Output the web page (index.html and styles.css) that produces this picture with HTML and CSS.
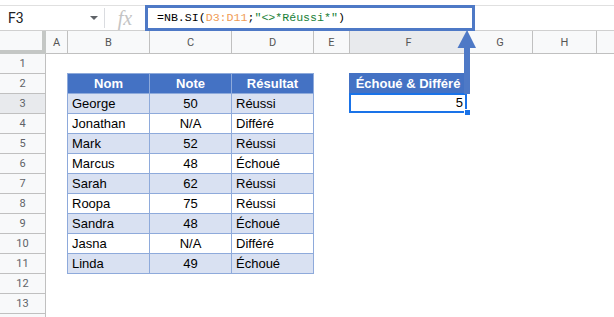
FILE: index.html
```html
<!DOCTYPE html>
<html lang="fr">

<head>
    <meta charset="UTF-8">
    <title>NB.SI - Échoué &amp; Différé</title>
    <link rel="stylesheet" href="styles.css">
</head>

<body>

    <div class="toolbar">
        <div class="namebox"><span>F3</span><span class="caret"></span></div>
        <div class="sep"></div>
        <div class="fx">fx</div>
        <div class="formula">=NB.SI(<span class="ref">D3:D11</span>;<span class="str">"&lt;&gt;*Réussi*"</span>)</div>
    </div>

    <div class="sheet">
        <div class="corner"></div>
        <div class="ch first">A</div>
        <div class="ch">B</div>
        <div class="ch">C</div>
        <div class="ch">D</div>
        <div class="ch">E</div>
        <div class="ch sel">F</div>
        <div class="ch">G</div>
        <div class="ch">H</div>
        <div class="ch"></div>

        <div class="rh">1</div>
        <div class="fill-all"></div>

        <div class="rh">2</div>
        <div></div>
        <div class="t th">Nom</div>
        <div class="t th">Note</div>
        <div class="t th last">Résultat</div>
        <div></div>
        <div class="out-head">Échoué &amp; Différé</div>
        <div class="fill-g"></div>

        <div class="rh sel">3</div>
        <div></div>
        <div class="t odd">George</div>
        <div class="t odd num">50</div>
        <div class="t odd last">Réussi</div>
        <div></div>
        <div class="out">5</div>
        <div class="fill-g"></div>

        <div class="rh">4</div>
        <div></div>
        <div class="t">Jonathan</div>
        <div class="t num">N/A</div>
        <div class="t last">Différé</div>
        <div class="fill-e"></div>

        <div class="rh">5</div>
        <div></div>
        <div class="t odd">Mark</div>
        <div class="t odd num">52</div>
        <div class="t odd last">Réussi</div>
        <div class="fill-e"></div>

        <div class="rh">6</div>
        <div></div>
        <div class="t">Marcus</div>
        <div class="t num">48</div>
        <div class="t last">Échoué</div>
        <div class="fill-e"></div>

        <div class="rh">7</div>
        <div></div>
        <div class="t odd">Sarah</div>
        <div class="t odd num">62</div>
        <div class="t odd last">Réussi</div>
        <div class="fill-e"></div>

        <div class="rh">8</div>
        <div></div>
        <div class="t">Roopa</div>
        <div class="t num">75</div>
        <div class="t last">Réussi</div>
        <div class="fill-e"></div>

        <div class="rh">9</div>
        <div></div>
        <div class="t odd">Sandra</div>
        <div class="t odd num">48</div>
        <div class="t odd last">Échoué</div>
        <div class="fill-e"></div>

        <div class="rh">10</div>
        <div></div>
        <div class="t">Jasna</div>
        <div class="t num">N/A</div>
        <div class="t last">Différé</div>
        <div class="fill-e"></div>

        <div class="rh">11</div>
        <div></div>
        <div class="t odd">Linda</div>
        <div class="t odd num">49</div>
        <div class="t odd last">Échoué</div>
        <div class="fill-e"></div>

        <div class="rh">12</div>
        <div class="fill-all"></div>

        <div class="rh">13</div>
        <div class="fill-all"></div>

        <div class="rh tail"></div>
        <div class="fill-all"></div>
    </div>

    <svg class="arrow" width="20" height="64" viewBox="0 0 20 64">
        <polygon points="0.5,18 10,0 19,18" fill="#4e79c6" />
        <rect x="7" y="17" width="6" height="47" fill="#4e79c6" />
    </svg>

</body>

</html>
```

FILE: styles.css
```css
html,
body {
    height: 100%;
}

body {
    margin: 0;
    font-family: "Liberation Sans", Arial, sans-serif;
    background: #fff;
    overflow: hidden;
    position: relative;
}

/* barre de formule */
.toolbar {
    display: flex;
    align-items: center;
    height: 24px;
    margin-top: 5px;
    border-top: 1px solid #e0e0e0;
    border-bottom: 1px solid #d0d0d0;
}

.namebox {
    width: 104px;
    box-sizing: border-box;
    padding: 0 6px 0 8px;
    display: flex;
    justify-content: space-between;
    align-items: center;
    font-family: Roboto, sans-serif;
    font-size: 14px;
    color: #202124;
}

.caret {
    width: 0;
    height: 0;
    border-left: 4px solid transparent;
    border-right: 4px solid transparent;
    border-top: 4px solid #5f6368;
}

.sep {
    width: 1px;
    height: 20px;
    background: #dadce0;
}

.fx {
    width: 40px;
    text-align: center;
    font-family: "Liberation Serif", serif;
    font-style: italic;
    font-size: 20px;
    line-height: 24px;
    color: #c4c4c4;
}

.formula {
    box-sizing: border-box;
    width: 330px;
    height: 26px;
    margin: -1px 0;
    border: 3px solid #4e79c6;
    padding-left: 9px;
    font-family: "Liberation Mono", monospace;
    font-size: 11.6px;
    line-height: 20px;
    white-space: pre;
    color: #000;
}

.formula .ref {
    color: #f09c55;
}

.formula .str {
    color: #188038;
}

/* grille */
.sheet {
    display: grid;
    grid-template-columns: 46px 21px 82px 82px 82px 36px 118px 65px 64px 1fr;
    grid-template-rows: 23px;
    grid-auto-rows: 20px;
}

.corner {
    background: #f8f9fa;
    border-right: 4px solid #c4c7c5;
    border-bottom: 4px solid #c4c7c5;
}

.ch {
    background: #f8f9fa;
    border-left: 1px solid #c0c0c0;
    border-bottom: 1px solid #c0c0c0;
    font-family: Roboto, sans-serif;
    font-size: 11px;
    color: #555;
    display: flex;
    align-items: center;
    justify-content: center;
}

.ch.first {
    border-left: none;
}

.rh {
    background: #f8f9fa;
    border-right: 1px solid #c0c0c0;
    border-bottom: 1px solid #c0c0c0;
    font-family: Roboto, sans-serif;
    font-size: 11px;
    color: #5f6368;
    display: flex;
    align-items: center;
    justify-content: center;
}

.rh.tail {
    height: 4px;
}

.ch.sel,
.rh.sel {
    background: #e8eaed;
}

.fill-all {
    grid-column: 2 / -1;
}

.fill-e {
    grid-column: 6 / -1;
}

.fill-g {
    grid-column: 8 / -1;
}

/* tableau */
.t {
    border-left: 1px solid #8eaadb;
    border-bottom: 1px solid #8eaadb;
    padding: 0 4px;
    font-size: 13px;
    line-height: 19px;
    color: #000;
    white-space: nowrap;
}

.t.odd {
    background: #d9e1f2;
}

.t.num {
    text-align: center;
}

.t.last {
    box-shadow: 1px 0 0 #8eaadb;
}

.t.th {
    background: #4472c4;
    color: #fff;
    font-weight: bold;
    text-align: center;
    box-shadow: 0 -1px 0 #8eaadb;
}

.t.th.last {
    box-shadow: 1px 0 0 #8eaadb, 0 -1px 0 #8eaadb, 1px -1px 0 #8eaadb;
}

.out-head {
    background: #4472c4;
    color: #fff;
    font-size: 13px;
    font-weight: bold;
    line-height: 19px;
    text-align: center;
    white-space: nowrap;
    box-shadow: 0 -1px 0 #4472c4;
}

.out {
    position: relative;
    margin: -1px 0 1px;
    background: #fff;
    box-shadow: inset 0 0 0 2px #1a73e8;
    padding-right: 4px;
    text-align: right;
    font-size: 13px;
    line-height: 20px;
    color: #000;
}

.out::after {
    content: "";
    position: absolute;
    right: -4px;
    bottom: -3px;
    width: 5px;
    height: 5px;
    background: #1a73e8;
    border: 1px solid #fff;
}

.arrow {
    position: absolute;
    left: 457px;
    top: 30px;
    z-index: 5;
}
```
